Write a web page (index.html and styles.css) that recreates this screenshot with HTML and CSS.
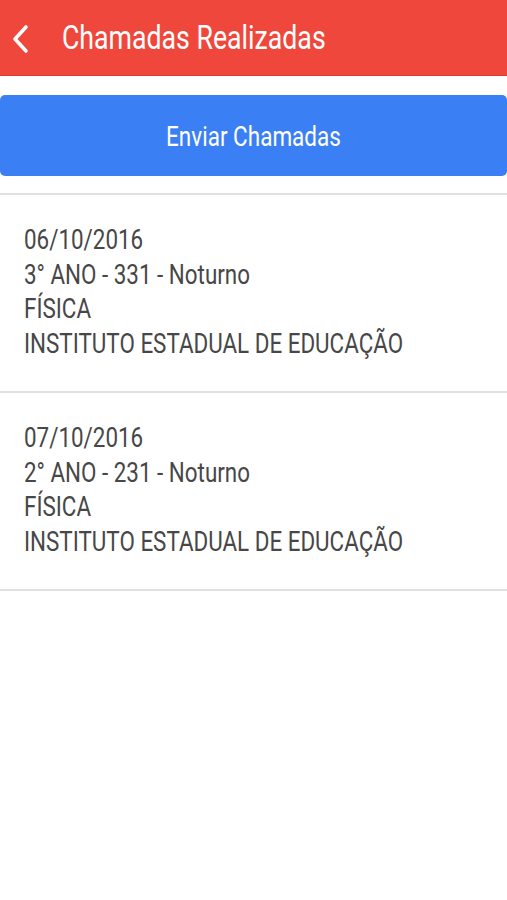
FILE: index.html
```html
<!DOCTYPE html>
<html lang="pt">
<head>
    <meta charset="UTF-8">
    <title>Chamadas Realizadas</title>
    <link rel="stylesheet" href="styles.css">
</head>
<body>

<div class="header">
    <a class="back" href="javascript:void(0)">
        <svg width="20" height="30" viewBox="0 0 20 30">
            <path d="M16 3 L5 15 L16 27" fill="none" stroke="#fff" stroke-width="3.6" stroke-linecap="round" stroke-linejoin="round"/>
        </svg>
    </a>
    <span class="title">Chamadas Realizadas</span>
</div>

<a class="sendbutton" href="javascript:void(0)"><span>Enviar Chamadas</span></a>

<div class="list">

    <div class="item">
        <div class="line">06/10/2016</div>
        <div class="line">3° ANO - 331 - Noturno</div>
        <div class="line">FÍSICA</div>
        <div class="line">INSTITUTO ESTADUAL DE EDUCAÇÃO</div>
    </div>

    <div class="item">
        <div class="line">07/10/2016</div>
        <div class="line">2° ANO - 231 - Noturno</div>
        <div class="line">FÍSICA</div>
        <div class="line">INSTITUTO ESTADUAL DE EDUCAÇÃO</div>
    </div>

</div>

</body>
</html>
```

FILE: styles.css
```css
*{
    margin:0;
    padding:0;
}

body{
    font-family: Roboto, "Liberation Sans", sans-serif;
    background-color: #fff;
    width: 507px;
}

.header{
    height: 75px;
    background-color: #f0473c;
    border-bottom: 1px solid #d93c32;
    color: #fff;
    display: flex;
    align-items: center;
}

.back{
    display: flex;
    width: 20px;
    height: 30px;
    margin-left: 10px;
    margin-top: 2px;
}

.title{
    display: inline-block;
    margin-left: 32px;
    font-size: 26.7px;
    transform: scaleY(1.25);
}

.sendbutton{
    display: flex;
    justify-content: center;
    align-items: center;
    height: 81px;
    margin-top: 19px;
    background-color: #3b7ff5;
    border-radius: 5px;
    color: #fff;
    text-decoration: none;
    font-size: 22.5px;
}

.sendbutton span{
    display: inline-block;
    transform: scaleY(1.22);
}

.list{
    margin-top: 17px;
    border-top: 2px solid #e0e0e0;
}

.item{
    padding: 27px 24px 30px;
    border-bottom: 2px solid #e0e0e0;
}

.line{
    font-size: 22.4px;
    line-height: 34.7px;
    color: #474747;
    transform: scaleY(1.2);
    transform-origin: left center;
}
```
